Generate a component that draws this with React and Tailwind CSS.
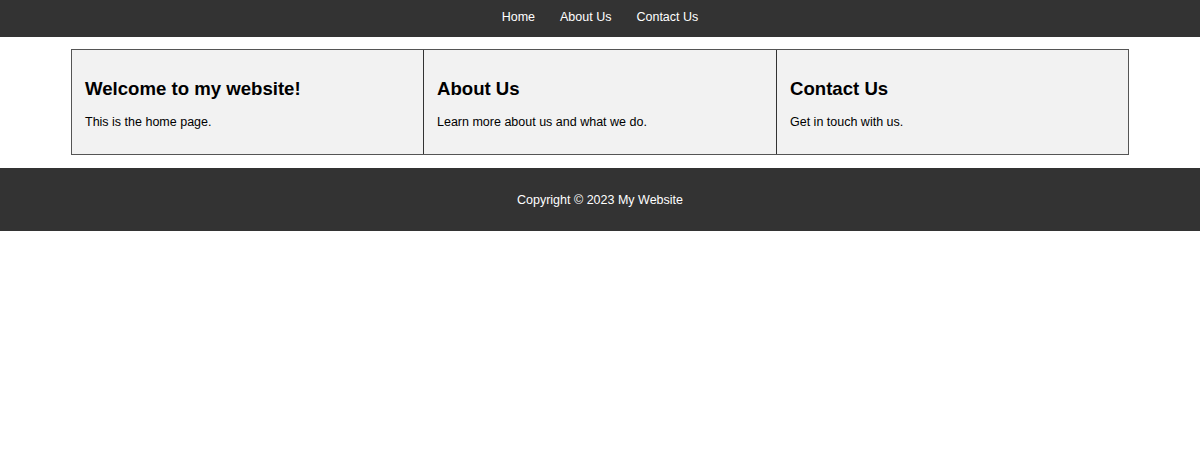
export default function App() {
  return (
    <div className="font-['Liberation_Sans',Arial,sans-serif] bg-white min-h-[451px]">
      <nav className="h-[37px] bg-[#333333] flex items-center justify-center gap-[25px] text-[12.5px] text-white pb-[3px]">
        <a href="#">Home</a>
        <a href="#">About Us</a>
        <a href="#">Contact Us</a>
      </nav>

      <main className="w-[1058px] mx-auto mt-[12px] grid grid-cols-[351px_353px_1fr] border border-[#555] bg-[#f2f2f2]">
        <section className="h-[104px] px-[13px] pt-[27px]">
          <h2 className="text-[18.6px] font-bold text-black leading-[24px]">Welcome to my website!</h2>
          <p className="mt-[12px] text-[12.5px] text-black leading-[18px]">This is the home page.</p>
        </section>
        <section className="h-[104px] px-[13px] pt-[27px] border-l border-[#333]">
          <h2 className="text-[18.6px] font-bold text-black leading-[24px]">About Us</h2>
          <p className="mt-[12px] text-[12.5px] text-black leading-[18px]">Learn more about us and what we do.</p>
        </section>
        <section className="h-[104px] px-[13px] pt-[27px] border-l border-[#333]">
          <h2 className="text-[18.6px] font-bold text-black leading-[24px]">Contact Us</h2>
          <p className="mt-[12px] text-[12.5px] text-black leading-[18px]">Get in touch with us.</p>
        </section>
      </main>

      <footer className="mt-[13px] h-[63px] bg-[#333333] flex items-center justify-center text-[12.5px] text-white pt-[1px]">
        Copyright © 2023 My Website
      </footer>
    </div>
  );
}
